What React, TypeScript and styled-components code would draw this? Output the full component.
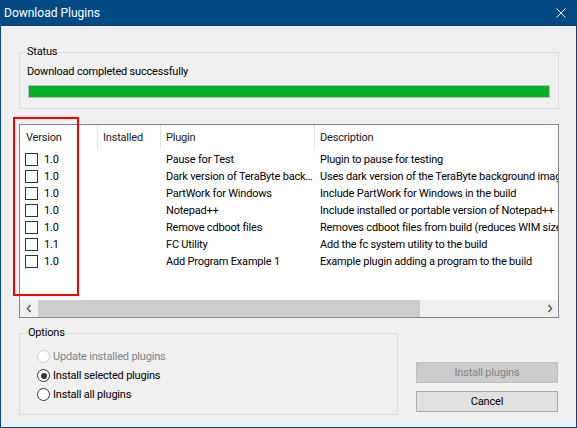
import React from 'react';
import styled, { createGlobalStyle } from 'styled-components';

const GlobalStyle = createGlobalStyle`
  html, body {
    margin: 0;
    padding: 0;
    background: #f0f0f0;
  }
  * {
    box-sizing: border-box;
  }
`;

const FONT = `Roboto, 'Noto Sans', sans-serif`;

const Window = styled.div`
  position: relative;
  display: flex;
  flex-direction: column;
  width: 577px;
  height: 428px;
  border: 1px solid #034a85;
  border-top: none;
  background: #f0f0f0;
  font-family: ${FONT};
  font-size: 11px;
  letter-spacing: -0.2px;
  color: #000;
  overflow: hidden;
`;

const TitleBar = styled.div`
  display: flex;
  align-items: center;
  justify-content: space-between;
  height: 26px;
  padding: 0 0 1px 3px;
  background: #034a85;
  color: #fff;
  font-size: 12px;
  letter-spacing: 0;
`;

const CloseButton = styled.div`
  display: flex;
  align-items: center;
  height: 26px;
  margin-right: 10px;
`;

const Body = styled.div`
  flex: 1;
  display: flex;
  flex-direction: column;
  padding: 0 17px 0 16px;
`;

const Group = styled.fieldset<{ $width: number }>`
  margin: 0 0 0 2px;
  min-width: 0;
  width: ${(p) => p.$width}px;
  border: 1px solid #dcdcdc;
  padding: 0 7px;
`;

const Legend = styled.legend`
  padding: 0 1px;
  line-height: 16px;
`;

const StatusGroup = styled(Group)`
  margin-top: 18px;
  padding: 0 8px 10px 6px;
`;

const StatusText = styled.div`
  margin: 4px 0 0 1px;
  line-height: 16px;
`;

const Progress = styled.div`
  margin: 5px 0 0 2px;
  height: 13px;
  border: 1px solid #bcbcbc;
  background: #e6e6e6;
`;

const ProgressFill = styled.div`
  height: 100%;
  background: #06b025;
`;

const List = styled.div`
  display: flex;
  flex-direction: column;
  margin: 15px 0 0 2px;
  width: 540px;
  height: 194px;
  border: 1px solid #828790;
  background: #fff;
  overflow: hidden;
`;

const Rows = styled.div`
  flex: 1;
  overflow: hidden;
`;

const Row = styled.div<{ $header?: boolean }>`
  display: grid;
  grid-template-columns: 78px 63px 154px 420px;
  height: ${(p) => (p.$header ? 26 : 17)}px;
  line-height: ${(p) => (p.$header ? 25 : 17)}px;
  white-space: nowrap;
`;

const HeadCell = styled.div<{ $pad?: number }>`
  padding-left: ${(p) => p.$pad ?? 5}px;
  height: 25px;
  border-right: 1px solid #e5e5e5;
  color: #1a1a1a;

  &:last-child {
    border-right: none;
  }
`;

const Cell = styled.div`
  display: flex;
  align-items: center;
  padding-left: 5px;
  overflow: hidden;

  & > span {
    overflow: hidden;
    text-overflow: ellipsis;
  }
`;

const Check = styled.span`
  flex: none;
  width: 13px;
  height: 13px;
  margin-right: 6px;
  border: 1px solid #333;
  background: #fff;
`;

const ScrollBar = styled.div`
  display: flex;
  height: 17px;
  background: #f0f0f0;
`;

const ScrollButton = styled.div`
  display: flex;
  align-items: center;
  justify-content: center;
  width: 17px;
  height: 100%;
`;

const ScrollThumb = styled.div`
  width: 382px;
  margin-left: 1px;
  background: #cdcdcd;
`;

const ScrollTrack = styled.div`
  flex: 1;
`;

const Bottom = styled.div`
  display: flex;
  align-items: flex-end;
  margin-top: 7px;
`;

const OptionsGroup = styled(Group)`
  padding: 6px 7px 10px 7px;
`;

const Radio = styled.label<{ $disabled?: boolean }>`
  display: flex;
  align-items: center;
  height: 19px;
  margin-left: 10px;
  color: ${(p) => (p.$disabled ? '#838383' : '#000')};
`;

const RadioDot = styled.span<{ $checked?: boolean; $disabled?: boolean }>`
  position: relative;
  flex: none;
  width: 13px;
  height: 13px;
  margin-right: 3px;
  border-radius: 50%;
  border: 1px solid ${(p) => (p.$disabled ? '#cccccc' : '#333')};
  background: #fff;

  &::after {
    content: '';
    display: ${(p) => (p.$checked ? 'block' : 'none')};
    position: absolute;
    left: 2.5px;
    top: 2.5px;
    width: 6px;
    height: 6px;
    border-radius: 50%;
    background: #333;
  }
`;

const Buttons = styled.div`
  display: flex;
  flex-direction: column;
  gap: 8px;
  margin: 0 0 3px 18px;
`;

const Button = styled.div<{ $disabled?: boolean }>`
  display: flex;
  align-items: center;
  justify-content: center;
  width: 142px;
  height: 21px;
  border: 1px solid ${(p) => (p.$disabled ? '#bfbfbf' : '#adadad')};
  background: ${(p) => (p.$disabled ? '#cccccc' : '#e1e1e1')};
  color: ${(p) => (p.$disabled ? '#838383' : '#000')};
`;

// red highlight drawn over the Version column
const Highlight = styled.div`
  position: absolute;
  left: 12px;
  top: 117px;
  width: 66px;
  height: 179px;
  border: 2px solid #ff0000;
  pointer-events: none;
`;

const plugins = [
  { version: '1.0', name: 'Pause for Test', desc: 'Plugin to pause for testing' },
  {
    version: '1.0',
    name: 'Dark version of TeraByte background',
    desc: 'Uses dark version of the TeraByte background image',
  },
  { version: '1.0', name: 'PartWork for Windows', desc: 'Include PartWork for Windows in the build' },
  {
    version: '1.0',
    name: 'Notepad++',
    desc: 'Include installed or portable version of Notepad++',
  },
  {
    version: '1.0',
    name: 'Remove cdboot files',
    desc: 'Removes cdboot files from build (reduces WIM size)',
  },
  { version: '1.1', name: 'FC Utility', desc: 'Add the fc system utility to the build' },
  {
    version: '1.0',
    name: 'Add Program Example 1',
    desc: 'Example plugin adding a program to the build',
  },
];

const Chevron = ({ right }: { right?: boolean }) => (
  <svg width='8' height='9' viewBox='0 0 8 9'>
    <path
      d={right ? 'M2.5 1 L5.5 4.5 L2.5 8' : 'M5.5 1 L2.5 4.5 L5.5 8'}
      fill='none'
      stroke='#606060'
      strokeWidth='1.6'
    />
  </svg>
);

const App: React.FC = () => {
  return (
    <Window>
      <GlobalStyle />
      <TitleBar>
        <span>Download Plugins</span>
        <CloseButton>
          <svg width='10' height='10' viewBox='0 0 10 10'>
            <path d='M0.5 0.5 L9.5 9.5 M9.5 0.5 L0.5 9.5' stroke='#fff' strokeWidth='1' />
          </svg>
        </CloseButton>
      </TitleBar>
      <Body>
        <StatusGroup $width={540}>
          <Legend>Status</Legend>
          <StatusText>Download completed successfully</StatusText>
          <Progress>
            <ProgressFill style={{ width: '100%' }} />
          </Progress>
        </StatusGroup>

        <List>
          <Rows>
            <Row $header>
              <HeadCell $pad={6}>Version</HeadCell>
              <HeadCell>Installed</HeadCell>
              <HeadCell>Plugin</HeadCell>
              <HeadCell>Description</HeadCell>
            </Row>
            {plugins.map((p) => (
              <Row key={p.name}>
                <Cell>
                  <Check />
                  {p.version}
                </Cell>
                <Cell />
                <Cell>
                  <span>{p.name}</span>
                </Cell>
                <Cell>{p.desc}</Cell>
              </Row>
            ))}
          </Rows>
          <ScrollBar>
            <ScrollButton>
              <Chevron />
            </ScrollButton>
            <ScrollThumb />
            <ScrollTrack />
            <ScrollButton>
              <Chevron right />
            </ScrollButton>
          </ScrollBar>
        </List>

        <Bottom>
          <OptionsGroup $width={379}>
            <Legend>Options</Legend>
            <Radio $disabled>
              <RadioDot $disabled />
              Update installed plugins
            </Radio>
            <Radio>
              <RadioDot $checked />
              Install selected plugins
            </Radio>
            <Radio>
              <RadioDot />
              Install all plugins
            </Radio>
          </OptionsGroup>
          <Buttons>
            <Button $disabled>Install plugins</Button>
            <Button>Cancel</Button>
          </Buttons>
        </Bottom>
      </Body>
      <Highlight />
    </Window>
  );
};

export default App;
